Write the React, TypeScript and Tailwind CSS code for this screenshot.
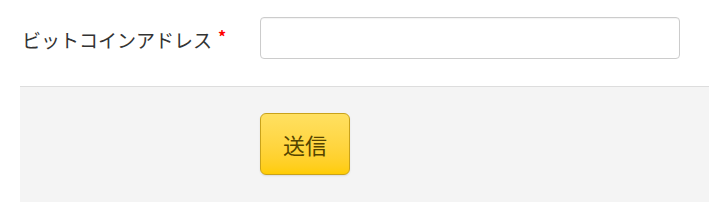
export default function App() {
  return (
    <div className="w-[709px] h-[221px] bg-white font-['Noto_Sans_CJK_JP','Noto_Sans',sans-serif] text-[#333]">
      <div className="flex items-start h-[86px] pl-[22px] pt-[17px]">
        <label className="w-[238px] mt-[12px] text-[19px] leading-[22px] flex items-start">
          ビットコインアドレス
          <span className="text-[#ff0000] text-[16px] leading-none ml-[6px] -mt-[1px] font-bold">*</span>
        </label>
        <input
          type="text"
          className="w-[420px] h-[42px] border border-[#cccccc] rounded-[4px] bg-white px-3 outline-none shadow-[inset_0_1px_1px_rgba(0,0,0,0.05)]"
        />
      </div>
      <div className="ml-[20px] h-[116px] bg-[#f4f4f4] border-t border-[#dddddd] pl-[240px] pt-[26px]">
        <button className="w-[90px] h-[62px] rounded-[6px] border border-[#c9a21a] bg-gradient-to-b from-[#ffe060] to-[#ffcc00] text-[22px] text-[#554400] leading-none shadow-[0_1px_2px_rgba(0,0,0,0.1)]">
          送信
        </button>
      </div>
    </div>
  );
}
